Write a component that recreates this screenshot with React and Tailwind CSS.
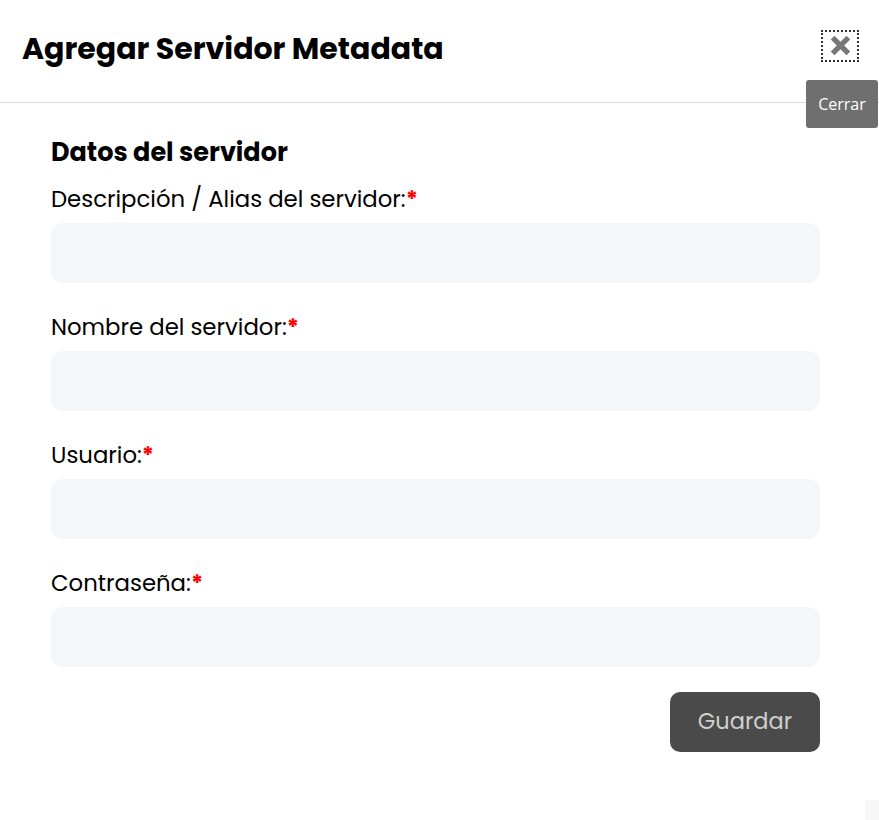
const fields = [
  { label: "Descripción / Alias del servidor:", type: "text" },
  { label: "Nombre del servidor:", type: "text" },
  { label: "Usuario:", type: "text" },
  { label: "Contraseña:", type: "password" },
];

function CloseIcon() {
  return (
    <svg width="21" height="21" viewBox="0 0 20 20" fill="none">
      <path d="M2.5 2.5 L17.5 17.5 M17.5 2.5 L2.5 17.5" stroke="#777777" strokeWidth="5" strokeLinecap="butt" />
    </svg>
  );
}

export default function App() {
  return (
    <div className="relative w-[879px] h-[820px] bg-white overflow-hidden font-['Poppins','Inter',sans-serif] text-black">
      {/* Header */}
      <div className="flex items-center justify-between h-[103px] pb-[5px] pl-[22px] pr-[21px] border-b border-[#dcdcdc]">
        <h1 className="text-[30px] font-bold">Agregar Servidor Metadata</h1>
        <button className="w-[34px] h-[28px] flex items-center justify-center outline-2 outline-dotted outline-[#333] -mt-[6px] mr-[1px]">
          <CloseIcon />
        </button>
      </div>

      {/* tooltip */}
      <div className="absolute left-[806px] top-[80px] w-[72px] h-[48px] rounded-[3px] bg-[#6f6f6f] text-white flex items-center justify-center text-[16px] font-['Open_Sans',sans-serif]">
        Cerrar
      </div>

      {/* Body */}
      <div className="pl-[51px] pt-[33px] pr-[59px]">
        <h2 className="text-[25.5px] font-bold leading-[32px]">Datos del servidor</h2>
        <div className="flex flex-col gap-[28px] mt-[15px]">
          {fields.map((f) => (
            <div key={f.label} className="flex flex-col">
              <label className="text-[22.8px] leading-[32px] mb-[8px]">
                {f.label}
                <span className="text-[#ff0000] font-bold">*</span>
              </label>
              <input
                type={f.type}
                className="h-[60px] rounded-[12px] bg-[#f4f7fa] px-4 outline-none"
              />
            </div>
          ))}
        </div>
        <div className="flex justify-end mt-[25px]">
          <button className="w-[150px] h-[60px] rounded-[10px] bg-[#4a4a4a] text-[#cfcfcf] text-[22.5px]">
            Guardar
          </button>
        </div>
      </div>

      <div className="absolute right-0 bottom-0 w-[14px] h-[20px] bg-[#f7f7f7]" />
    </div>
  );
}
